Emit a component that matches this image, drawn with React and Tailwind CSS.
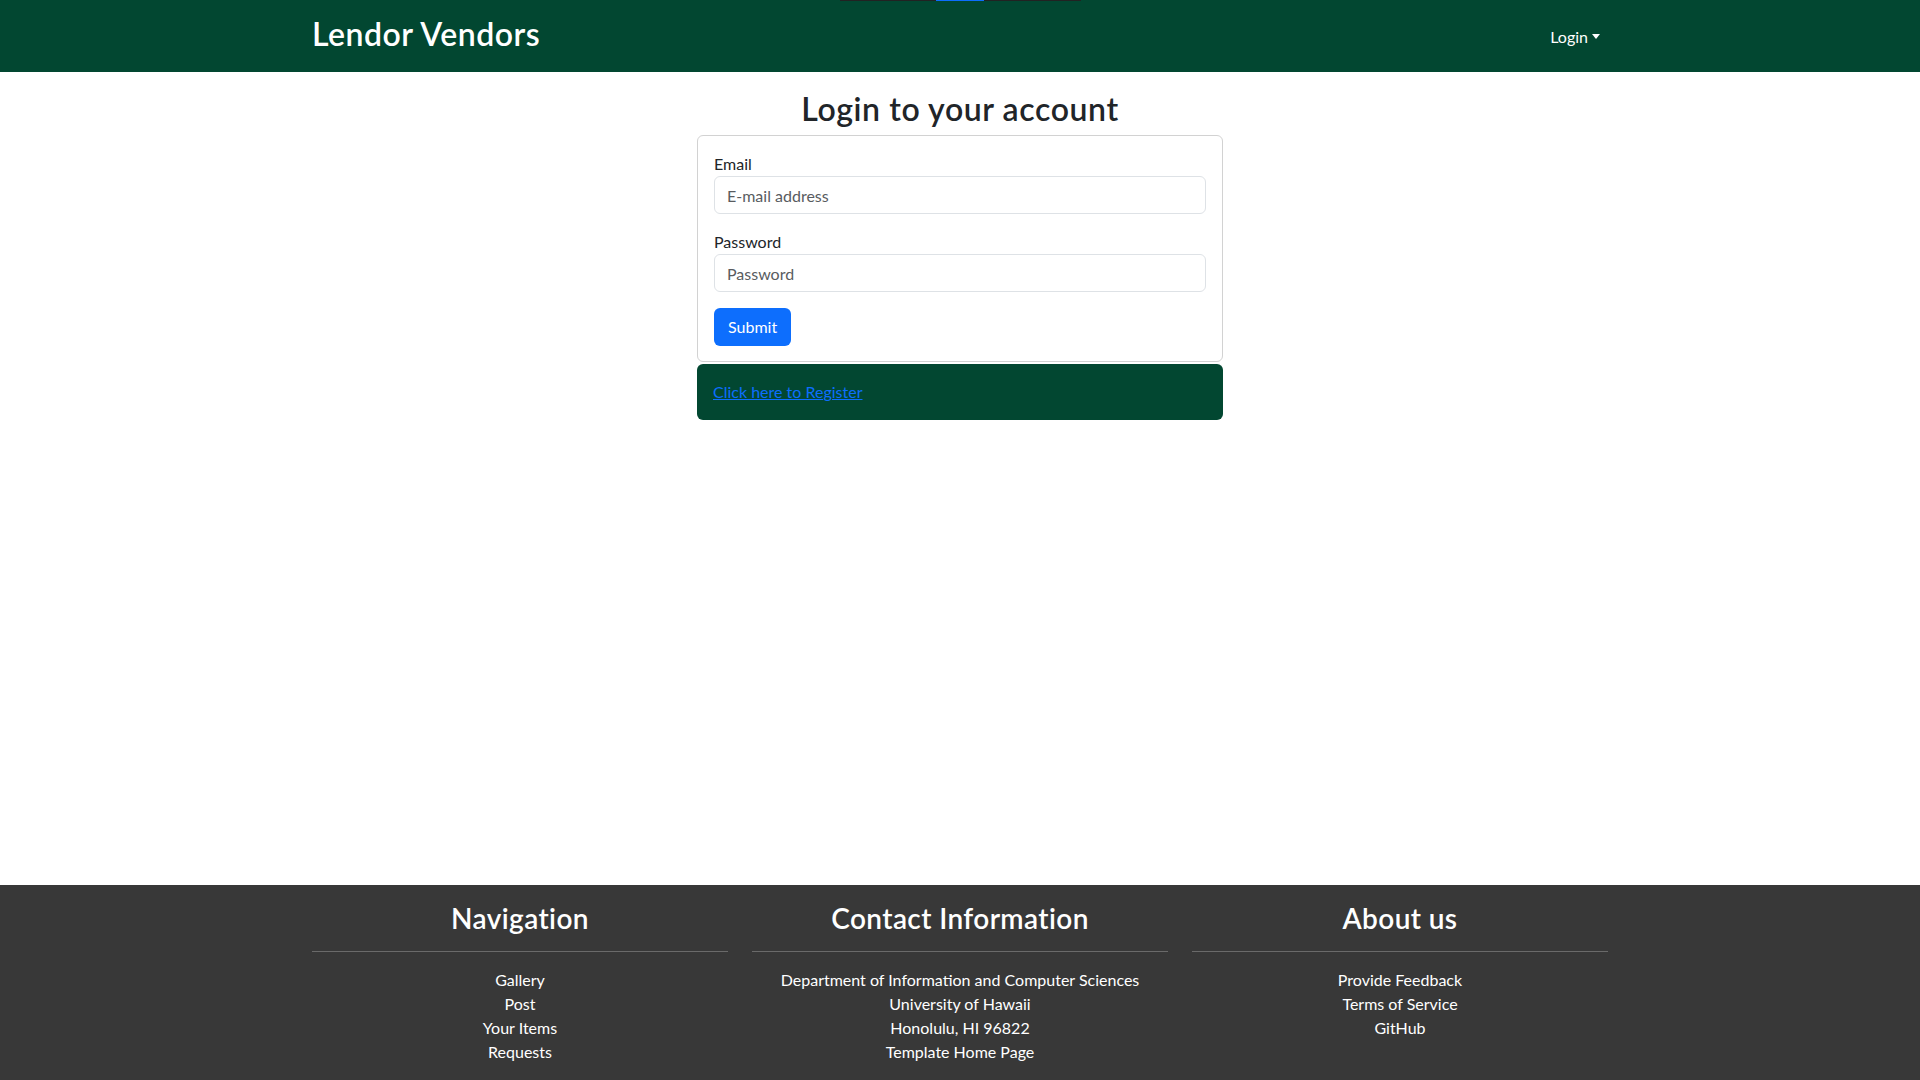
export default function App() {
  const cols = [
    { title: "Navigation", items: ["Gallery", "Post", "Your Items", "Requests"] },
    {
      title: "Contact Information",
      items: [
        "Department of Information and Computer Sciences",
        "University of Hawaii",
        "Honolulu, HI 96822",
        "Template Home Page",
      ],
    },
    { title: "About us", items: ["Provide Feedback", "Terms of Service", "GitHub"] },
  ];
  return (
    <div className="min-h-screen flex flex-col bg-white text-[#212529] font-['Lato','Noto_Sans',sans-serif] text-base">
      <nav className="relative h-[72px] bg-[#024731] shrink-0">
        <div className="absolute top-0 left-[840px] w-[241px] h-px bg-[#222] flex">
          <div className="ml-[96px] w-[48px] h-px bg-[#0d6efd]" />
        </div>
        <div className="mx-auto max-w-[1320px] px-3 h-full flex items-center justify-between">
          <span className="text-[32px] text-white font-semibold leading-none pb-[5px] tracking-[0.5px]">Lendor Vendors</span>
          <span className="text-white px-2 pt-[1px] flex items-center leading-6">
            Login
            <span className="ml-[4px] inline-block border-t-[5px] border-x-[4.5px] border-x-transparent border-t-white" />
          </span>
        </div>
      </nav>

      <main className="flex-1">
        <div className="mx-auto max-w-[1320px] px-3 pt-[18px] flex flex-col items-center">
          <h2 className="text-[32px] leading-[1.2] font-semibold mb-[7px] tracking-[0.6px]">Login to your account</h2>
          <div className="w-[526px] border border-[#d2d2d2] rounded-md px-4 pt-4 pb-[15px]">
            <label className="block leading-6">Email</label>
            <input
              className="block w-full h-[38px] border border-[#dee2e6] rounded-md px-3 text-base placeholder:text-[#595c5f] outline-none"
              placeholder="E-mail address"
            />
            <label className="block leading-6 mt-4">Password</label>
            <input
              type="password"
              className="block w-full h-[38px] border border-[#dee2e6] rounded-md px-3 text-base placeholder:text-[#595c5f] outline-none"
              placeholder="Password"
            />
            <button className="mt-4 h-[38px] px-[14px] rounded-md bg-[#0d6efd] text-white leading-6">Submit</button>
          </div>
          <div className="w-[526px] mt-0.5 rounded-md bg-[#024731] p-4 leading-6">
            <a href="#" className="text-[#0d6efd] underline">Click here to Register</a>
          </div>
        </div>
      </main>

      <footer className="bg-[#383838] text-white shrink-0">
        <div className="mx-auto max-w-[1320px] px-3 py-4 grid grid-cols-3 gap-6 text-center">
          {cols.map((c) => (
            <div key={c.title}>
              <h3 className="text-[28px] leading-[34px] font-semibold tracking-[0.4px]">{c.title}</h3>
              <hr className="mt-4 mb-4 border-0 border-t border-white/25" />
              <div className="leading-6 flex flex-col items-center">
                {c.items.map((i) => (
                  <span key={i}>{i}</span>
                ))}
              </div>
            </div>
          ))}
        </div>
      </footer>
    </div>
  );
}
